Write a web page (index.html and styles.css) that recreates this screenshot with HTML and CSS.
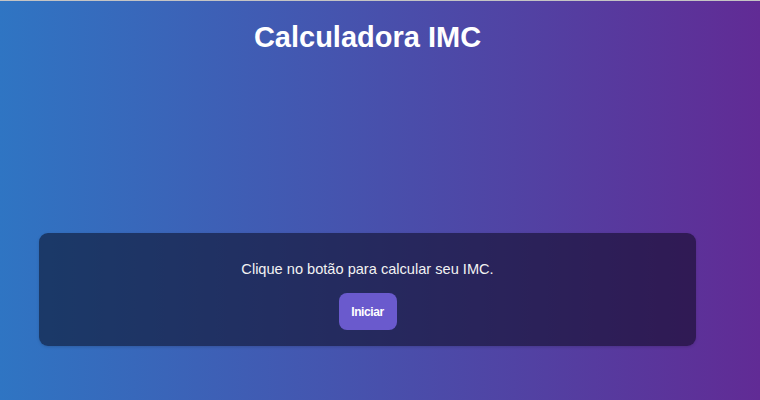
FILE: index.html
```html
<!DOCTYPE html>
<html lang="pt">
<head>
<meta charset="utf-8">
<title>Calculadora IMC</title>
<link rel="stylesheet" href="styles.css">
</head>
<body>
<div class="page">
  <h1 class="title">Calculadora IMC</h1>
  <section class="card">
    <p class="msg">Clique no botão para calcular seu IMC.</p>
    <button class="btn" type="button">Iniciar</button>
  </section>
</div>
</body>
</html>
```
FILE: styles.css
```css
html, body {
  margin: 0;
  padding: 0;
  height: 100%;
}
body {
  background: linear-gradient(to right, #2f75c3, #612b95);
  font-family: "Liberation Sans", Arial, sans-serif;
  color: #fff;
  border-top: 1px solid #c4c4c4;
  box-sizing: border-box;
}
.page {
  width: 735px;
  display: flex;
  flex-direction: column;
  align-items: stretch;
}
.title {
  margin: 20px 0 0;
  font-size: 29px;
  font-weight: bold;
  text-align: center;
  line-height: 33px;
}
.card {
  margin: 179px 39px 0;
  padding: 28px 16px 16px;
  background: rgba(4, 2, 16, 0.5);
  border-radius: 9px;
  display: flex;
  flex-direction: column;
  align-items: center;
  box-shadow: 0 1px 3px rgba(0,0,0,0.15);
}
.msg {
  margin: 0 0 15px;
  font-size: 14.6px;
  line-height: 17px;
  color: #f2f2f2;
}
.btn {
  width: 58px;
  height: 37px;
  padding: 0;
  border: none;
  border-radius: 8px;
  background: #6a5acd;
  color: #fff;
  font-family: "Liberation Sans", Arial, sans-serif;
  font-size: 12px;
  font-weight: bold;
  letter-spacing: -0.4px;
}
```
